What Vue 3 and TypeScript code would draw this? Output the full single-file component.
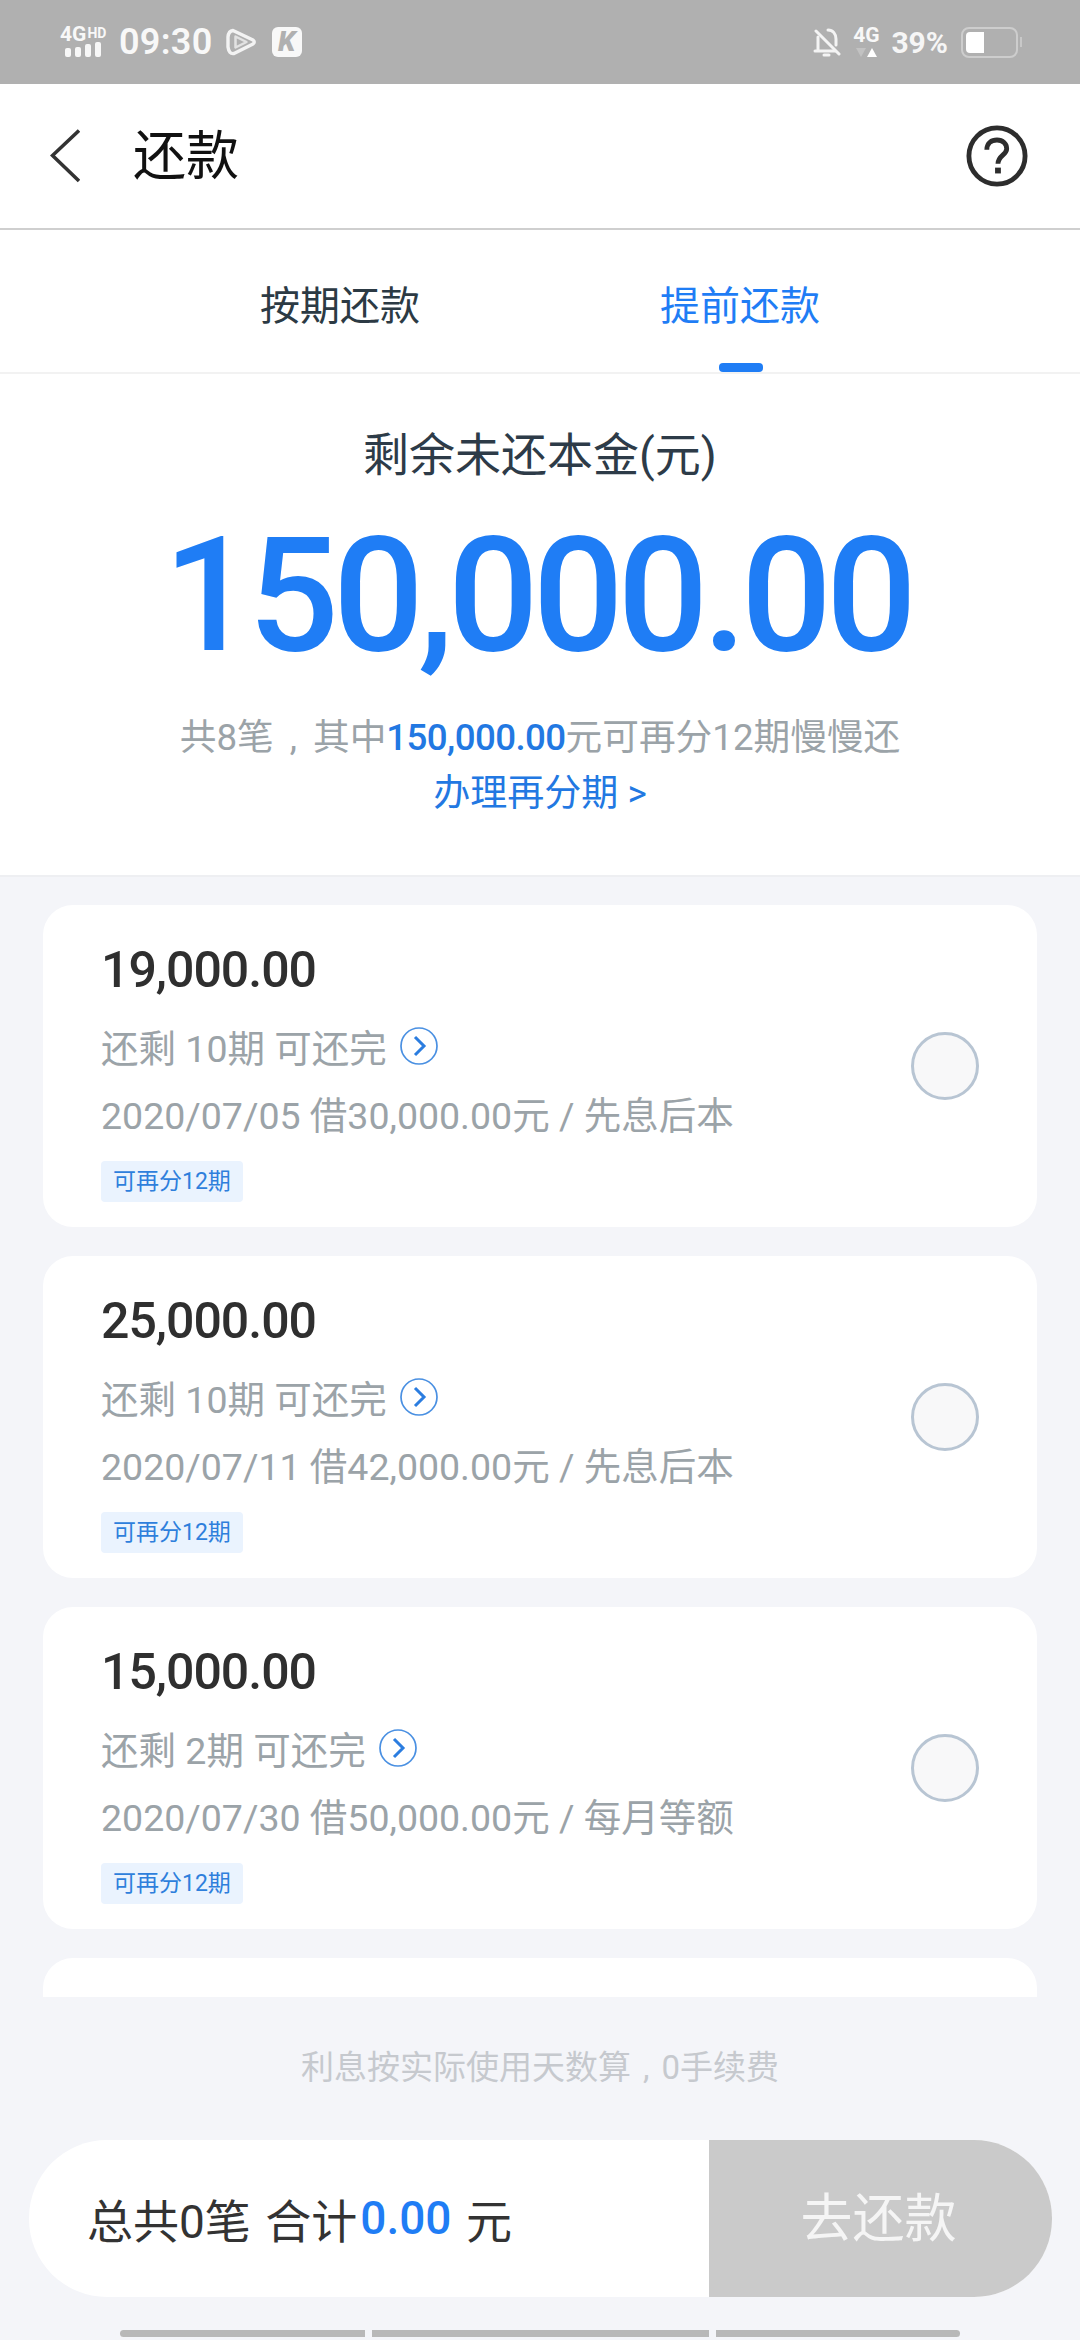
<script setup lang="ts">
interface Loan { amount: string; left: string; date: string; loan: string; kind: string }
const loans: Loan[] = [
  { amount: '19,000.00', left: '还剩 10期 可还完', date: '2020/07/05', loan: '借30,000.00元', kind: '先息后本' },
  { amount: '25,000.00', left: '还剩 10期 可还完', date: '2020/07/11', loan: '借42,000.00元', kind: '先息后本' },
  { amount: '15,000.00', left: '还剩 2期 可还完', date: '2020/07/30', loan: '借50,000.00元', kind: '每月等额' },
]
</script>

<template>
  <div class="page">
    <div class="status">
      <div class="status-side">
        <div class="net">
          <div class="net-text"><span class="g4">4G</span><span class="hd">HD</span></div>
          <div class="bars"><i class="b1"></i><i class="b2"></i><i class="b3"></i><i class="b4"></i></div>
        </div>
        <span class="time">09:30</span>
        <svg class="play" width="30" height="30" viewBox="0 0 30 30">
          <path d="M7 3.5 L27 13 Q29.5 15 27 17 L8 26.5 Q3 27.5 2 20 V10 Q2.500 4 7 3.500 Z" fill="none" stroke="#f3f3f3" stroke-width="3.400" stroke-linejoin="round"/>
          <path d="M9.500 9.500 L20.500 15 L9.500 20.500 Z" fill="none" stroke="#e2e2e2" stroke-width="2.500" stroke-linejoin="round"/>
        </svg>
        <span class="kbadge">K</span>
      </div>
      <div class="status-side right">
        <svg class="bell" width="28" height="32" viewBox="0 0 28 32">
          <path d="M3 5 L26 28" stroke="#f4f4f4" stroke-width="3" stroke-linecap="round"/>
          <path d="M15 4 C20 4 23 8 23 13 V19 M5 11 V24 M2 25 H22" fill="none" stroke="#f4f4f4" stroke-width="3" stroke-linecap="round"/>
          <path d="M11 29 H16" stroke="#f4f4f4" stroke-width="3" stroke-linecap="round"/>
        </svg>
        <div class="net2">
          <span class="g42">4G</span>
          <div class="tri"><i class="down"></i><i class="up"></i></div>
        </div>
        <span class="pct">39%</span>
        <div class="battery"><div class="level"></div></div>
        <i class="tip-cap"></i>
      </div>
    </div>

    <header class="nav">
      <svg class="back" width="30" height="54" viewBox="0 0 30 54">
        <path d="M29 1.500 L2.500 26.500 L29 52" fill="none" stroke="#333" stroke-width="3.600"/>
      </svg>
      <h1 class="title">还款</h1>
      <svg class="help" width="62" height="62" viewBox="0 0 64 64">
        <circle cx="32" cy="32" r="29" fill="none" stroke="#2d2d2d" stroke-width="5"/>
        <path d="M21.500 25.500 C21.500 18.500 26.500 15.500 32 15.500 C38 15.500 42 19.500 42 24.500 C42 31 33 31.500 33 40" fill="none" stroke="#2d2d2d" stroke-width="5"/>
        <rect x="30" y="44" width="6" height="6" fill="#2d2d2d"/>
      </svg>
    </header>

    <div class="tabs">
      <div class="tab">按期还款</div>
      <div class="tab active">提前还款<i class="indicator"></i></div>
    </div>

    <section class="hero">
      <div class="hero-label">剩余未还本金(元)</div>
      <div class="hero-amount">150,000.00</div>
      <div class="hero-sub">共8笔<span class="comma">,</span>其中<span class="sub-blue">150,000.00</span>元可再分12期慢慢还</div>
      <div class="hero-link">办理再分期 &gt;</div>
    </section>

    <div class="list">
      <article v-for="item in loans" :key="item.date" class="card">
        <div class="card-main">
          <div class="amount">{{ item.amount }}</div>
          <div class="left-row">
            <span>{{ item.left }}</span>
            <svg class="go" width="38" height="38" viewBox="0 0 38 38">
              <circle cx="19" cy="19" r="18" fill="none" stroke="#4a90e2" stroke-width="1.700"/>
              <path d="M15 10 L24 19 L15 28" fill="none" stroke="#2b7de0" stroke-width="3"/>
            </svg>
          </div>
          <div class="meta">{{ item.date }} {{ item.loan }} / {{ item.kind }}</div>
          <span class="tag">可再分12期</span>
        </div>
        <div class="radio"></div>
      </article>
      <article class="card"></article>
    </div>

    <div class="note">利息按实际使用天数算<span class="note-comma">,</span>0手续费</div>

    <div class="bar">
      <div class="total">总共0笔 合计<span class="total-blue">0.00</span> 元</div>
      <div class="pay">去还款</div>
    </div>

    <div class="home">
      <i class="seg s1"></i><i class="seg s2"></i><i class="seg s3"></i>
    </div>
  </div>
</template>

<style>
html, body { margin: 0; padding: 0; background: #f4f5f9; }
</style>

<style scoped>
.page {
  width: 1080px;
  height: 2340px;
  overflow: hidden;
  background: #f4f5f9;
  display: flex;
  flex-direction: column;
  font-family: Roboto, "Noto Sans CJK SC", sans-serif;
}
.status {
  height: 84px;
  flex: none;
  background: #b0b0b0;
  color: #fff;
  display: flex;
  justify-content: space-between;
  padding: 0 60px;
  box-sizing: border-box;
}
.status-side { display: flex; align-items: center; }
.net { width: 47px; height: 30px; display: flex; flex-direction: column; }
.net-text { display: flex; align-items: flex-start; height: 15px; line-height: 15px; font-weight: 700; color: #f8f8f8; }
.g4 { font-size: 21px; line-height: 15px; }
.hd { font-size: 14px; line-height: 13px; margin-left: 1px; }
.bars { display: flex; align-items: flex-end; gap: 4px; margin-left: 5px; height: 15px; }
.bars i { width: 6px; background: #f7f7f7; border-radius: 2px; display: block; }
.b1 { height: 9px; }
.b2 { height: 10px; }
.b3 { height: 13px; }
.b4 { height: 15px; }
.time { font-size: 36px; font-weight: 600; margin-left: 12px; color: #f8f8f8; letter-spacing: .3px; }
.play { margin-left: 13px; }
.kbadge {
  width: 30px; height: 30px; margin-left: 16px;
  background: #f8f8f8; color: #b0b0b0; border-radius: 6px;
  font-size: 28px; font-weight: 900; line-height: 30px; text-align: center; font-style: italic;
}
.bell { margin-right: 12px; }
.net2 { width: 26px; height: 30px; display: flex; flex-direction: column; align-items: center; margin-right: 12px; }
.g42 { font-size: 21px; font-weight: 700; line-height: 17px; color: #f8f8f8; }
.tri { display: flex; gap: 1px; margin-top: 4px; }
.tri i { width: 0; height: 0; border-left: 5px solid transparent; border-right: 5px solid transparent; display: block; }
.down { border-top: 9px solid #c2c2c2; }
.up { border-bottom: 9px solid #fff; }
.pct { font-size: 30px; font-weight: 700; color: #f6f6f6; margin-right: 13px; }
.battery {
  width: 57px; height: 31px; box-sizing: border-box;
  border: 2.500px solid #cdcdcd; border-radius: 8px; padding: 3px;
}
.level { width: 18px; height: 100%; background: #fff; border-radius: 4px 0 0 4px; }
.tip-cap { width: 2px; height: 10px; background: #c8c8c8; margin-left: 2px; margin-right: -2px; }

.nav {
  height: 146px; flex: none; box-sizing: border-box;
  background: #fff; border-bottom: 2px solid #cfcfcf;
  display: flex; align-items: center; padding: 0 52px 0 50px;
}
.title { flex: 1; margin: 0 0 8px 53px; font-size: 53px; font-weight: 400; color: #111; }

.tabs {
  height: 144px; flex: none; box-sizing: border-box;
  background: #fff; border-bottom: 2px solid #f2f2f2;
  display: grid; grid-template-columns: 400px 400px; padding: 0 140px;
}
.tab {
  position: relative; font-size: 40px; color: #2c3a44;
  display: flex; align-items: center; justify-content: center; padding-top: 4px;
}
.tab.active { color: #1f7df5; }
.indicator {
  position: absolute; left: 179px; bottom: 0; width: 44px; height: 9px;
  background: #1f7df5; border-radius: 4px;
}

.hero {
  height: 503px; flex: none; box-sizing: border-box;
  background: #fff; display: flex; flex-direction: column; align-items: center;
  border-bottom: 2px solid #eeeff2;
}
.hero-label { margin-top: 49px; font-size: 46px; line-height: 64px; color: #2d3b48; }
.hero-amount {
  margin-top: 15px; padding-right: 6px; font-size: 160px; line-height: 188px; font-weight: 500;
  color: #1f7df5; letter-spacing: -6px;
}
.hero-sub { margin-top: 23px; font-size: 36.700px; line-height: 50px; color: #9ba3a8; }
.comma { margin: 0 16px; }
.sub-blue { color: #2278e2; font-weight: 500; letter-spacing: -.6px; }
.hero-link { margin-top: 6px; font-size: 37px; line-height: 50px; color: #2278e2; }

.list {
  height: 1120px; flex: none; overflow: hidden; box-sizing: border-box;
  padding: 28px 43px 0; display: flex; flex-direction: column; gap: 29px;
}
.card {
  height: 322px; flex: none; box-sizing: border-box;
  background: #fff; border-radius: 30px;
  display: flex; align-items: center; justify-content: space-between;
  padding: 0 58px 0 58px;
}
.card-main { display: flex; flex-direction: column; align-items: flex-start; height: 100%; }
.amount { margin-top: 35px; font-size: 50px; line-height: 60px; font-weight: 500; color: #2f2f2f; letter-spacing: -1px; }
.left-row {
  margin-top: 20px; height: 50px; display: flex; align-items: center; gap: 13px;
  font-size: 37.500px; color: #9ba3a8;
}
.go { margin-top: 2px; }
.meta { margin-top: 21px; font-size: 37.500px; line-height: 50px; color: #9ba3a8; }
.tag {
  margin-top: 20px; height: 41px; line-height: 41px; padding: 0 12px;
  font-size: 23px; color: #2e7fdc; background: #eaf3fe; border-radius: 4px;
}
.radio {
  width: 68px; height: 68px; box-sizing: border-box;
  border: 3px solid #b8c5d3; border-radius: 50%; background: #f8f8f9;
}

.note {
  height: 143px; flex: none; box-sizing: border-box; padding-top: 47px;
  text-align: center; font-size: 33px; line-height: 48px; color: #c6c9ce;
}
.note-comma { margin: 0 12px; }
.bar {
  height: 157px; flex: none; margin: 0 28px 0 29px;
  background: #fff; border-radius: 78px; overflow: hidden;
  display: flex; align-items: stretch;
}
.total {
  flex: 1; display: flex; align-items: center; padding: 0 0 2px 58px; white-space: pre;
  font-size: 46px; color: #333; word-spacing: 3px;
}
.total-blue { color: #1f7df5; font-weight: 500; margin-left: 3px; }
.pay {
  width: 343px; background: #cacaca; color: #f5f5f5; font-size: 52px;
  display: flex; align-items: center; justify-content: center; box-sizing: border-box; padding: 0 4px 8px 0;
}
.home { margin-top: 33px; padding-left: 120px; display: flex; gap: 7px; }
.seg { height: 7px; background: #b8b8b8; display: block; }
.s1 { width: 245px; border-radius: 4px 0 0 4px; }
.s2 { width: 337px; }
.s3 { width: 244px; border-radius: 0 4px 4px 0; }
</style>
